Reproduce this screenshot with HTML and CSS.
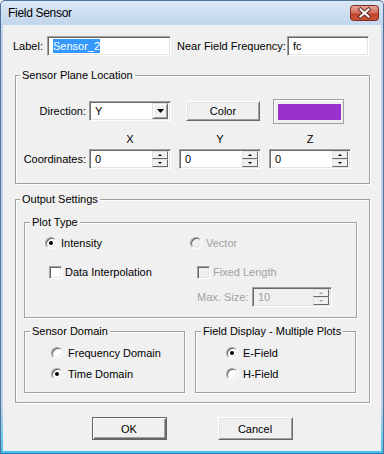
FILE: index.html
```html
<!DOCTYPE html>
<html lang="en">
<head>
  <meta charset="UTF-8">
  <title>Field Sensor</title>
  <link rel="stylesheet" href="styles.css">
</head>
<body>
  <div class="window">
    <div class="titlebar">
      <span class="title">Field Sensor</span>
      <span class="close">
        <svg width="29" height="16" viewBox="0 0 29 16">
          <defs>
            <linearGradient id="red" x1="0" y1="0" x2="0" y2="1">
              <stop offset="0" stop-color="#e8a99b"/>
              <stop offset="0.5" stop-color="#d4705c"/>
              <stop offset="0.55" stop-color="#c2442c"/>
              <stop offset="1" stop-color="#c9553a"/>
            </linearGradient>
          </defs>
          <rect x="0.5" y="0.5" width="28" height="15" rx="3" fill="url(#red)" stroke="#7a2a20"/>
          <path d="M10.5 4.5 L18.5 11.5 M18.5 4.5 L10.5 11.5" stroke="#5a2218" stroke-width="4" stroke-linecap="square"/>
          <path d="M10.5 4.5 L18.5 11.5 M18.5 4.5 L10.5 11.5" stroke="#fff" stroke-width="2.2" stroke-linecap="square"/>
        </svg>
      </span>
    </div>

    <div class="client">
      <div class="top-row">
        <span class="lbl lbl-label">Label:</span>
        <div class="edit w-label"><span class="sel">Sensor_2</span></div>
        <span class="lbl lbl-freq">Near Field Frequency:</span>
        <div class="edit w-freq">fc</div>
      </div>

      <div class="group g-plane">
        <div class="group-title">Sensor Plane Location</div>
        <div class="row dir-row">
          <span class="rlabel">Direction:</span>
          <div class="edit combo">
            <span class="combo-text">Y</span>
            <span class="combo-btn">
              <svg width="7" height="4" viewBox="0 0 7 4"><polygon points="0,0 7,0 3.5,4" fill="#000"/></svg>
            </span>
          </div>
          <button class="btn btn-color">Color</button>
          <div class="swatch"><div class="swatch-fill"></div></div>
        </div>
        <div class="row axis-row">
          <span class="rlabel"></span>
          <span class="axis">X</span>
          <span class="axis">Y</span>
          <span class="axis">Z</span>
        </div>
        <div class="row coord-row">
          <span class="rlabel">Coordinates:</span>
          <div class="edit spin"><span class="spin-text">0</span><span class="spin-btns"><span class="spin-up"></span><span class="spin-down"></span></span></div>
          <div class="edit spin"><span class="spin-text">0</span><span class="spin-btns"><span class="spin-up"></span><span class="spin-down"></span></span></div>
          <div class="edit spin"><span class="spin-text">0</span><span class="spin-btns"><span class="spin-up"></span><span class="spin-down"></span></span></div>
        </div>
      </div>

      <div class="group g-output">
        <div class="group-title">Output Settings</div>

        <div class="group g-plot">
          <div class="group-title inner">Plot Type</div>
          <div class="plot-grid">
            <div class="opt row-a"><span class="radio on"></span>Intensity</div>
            <div class="opt row-a disabled"><span class="radio"></span>Vector</div>
            <div class="opt row-b ind-1"><span class="check"></span>Data Interpolation</div>
            <div class="opt row-b ind-2 disabled"><span class="check"></span>Fixed Length</div>
            <div class="opt row-c"></div>
            <div class="opt row-c ind-2 disabled">
              <span class="max-label">Max. Size:</span>
              <div class="edit spin spin-max"><span class="spin-text">10</span><span class="spin-btns"><span class="spin-up"></span><span class="spin-down"></span></span></div>
            </div>
          </div>
        </div>

        <div class="bottom-groups">
          <div class="group g-domain">
            <div class="group-title inner">Sensor Domain</div>
            <div class="opt first"><span class="radio"></span>Frequency Domain</div>
            <div class="opt second"><span class="radio on"></span>Time Domain</div>
          </div>
          <div class="group g-field">
            <div class="group-title inner">Field Display - Multiple Plots</div>
            <div class="opt first"><span class="radio on"></span>E-Field</div>
            <div class="opt second"><span class="radio"></span>H-Field</div>
          </div>
        </div>
      </div>

      <div class="buttons">
        <button class="btn btn-default">OK</button>
        <button class="btn">Cancel</button>
      </div>
    </div>
  </div>
</body>
</html>
```

FILE: styles.css
```css
body {
  margin: 0;
  background: #fff;
  font-family: "Liberation Sans", Arial, sans-serif;
  font-size: 11px;
  color: #000;
}
.window {
  width: 384px;
  height: 454px;
  box-sizing: border-box;
  border: 1px solid #52729a;
  border-bottom-color: #1f7fb8;
  border-radius: 5px 5px 0 0;
  padding: 0 2px 2px 2px;
  background: linear-gradient(#dce8f5, #c0d5ec 24px, #b9d3ec 90%, #45c0ec);
  display: flex;
  flex-direction: column;
}
.titlebar {
  height: 24px;
  display: flex;
  align-items: center;
  justify-content: space-between;
  padding: 0 2px 0 5px;
}
.title {
  font-size: 12px;
  letter-spacing: -0.3px;
}
.close {
  display: flex;
}
.client {
  flex: 1;
  background: #f0f0f0;
  padding: 11px 11px 0 12px;
}

/* sunken edit box */
.edit {
  box-sizing: border-box;
  height: 20px;
  background: #fff;
  border: 1px solid;
  border-color: #a0a0a0 #fff #fff #a0a0a0;
  box-shadow: inset 1px 1px #696969, inset -1px -1px #e3e3e3;
  padding: 0 4px 0 5px;
  display: flex;
  align-items: center;
}
.top-row {
  display: flex;
  align-items: center;
  margin-left: -2px;
}
.lbl-label {
  width: 34px;
}
.w-label {
  width: 124px;
}
.lbl-freq {
  width: 110px;
  margin-left: 6px;
}
.w-freq {
  width: 82px;
}
.sel {
  background: #3399ff;
  color: #fff;
  line-height: 14px;
}

/* group boxes */
.group {
  border: 1px solid #a0a0a0;
  box-shadow: inset 1px 1px #fff, 1px 1px #fff;
}
.group-title {
  width: fit-content;
  margin: -7px 0 0 4px;
  padding: 0 2px;
  line-height: 13px;
  background: #f0f0f0;
}
.group-title.inner {
  margin-left: 5px;
}
.g-plane {
  width: 355px;
  box-sizing: border-box;
  margin-top: 19px;
  padding-bottom: 14px;
}
.row {
  display: flex;
  align-items: center;
}
.rlabel {
  width: 70px;
  margin-right: 3px;
  text-align: right;
}
.dir-row {
  margin-top: 19px;
  height: 20px;
}
.combo {
  width: 82px;
  justify-content: space-between;
  padding-right: 2px;
}
.combo-btn {
  box-sizing: border-box;
  width: 16px;
  height: 16px;
  background: #f0f0f0;
  border: 1px solid;
  border-color: #e3e3e3 #696969 #696969 #e3e3e3;
  box-shadow: inset 1px 1px #fff, inset -1px -1px #a0a0a0;
  display: flex;
  align-items: center;
  justify-content: center;
}
.btn {
  box-sizing: border-box;
  width: 75px;
  height: 23px;
  font-family: inherit;
  font-size: 11px;
  color: #000;
  background: #f0f0f0;
  border: 1px solid;
  border-color: #fff #696969 #696969 #fff;
  box-shadow: inset 1px 1px #e3e3e3, inset -1px -1px #a0a0a0;
  padding: 0;
}
.btn-color {
  width: 74px;
  height: 20px;
  margin-left: 15px;
}
.swatch {
  box-sizing: border-box;
  width: 71px;
  height: 25px;
  margin-left: 13px;
  border: 1px solid #a0a0a0;
  box-shadow: inset 1px 1px #fff;
  padding: 4px 2px 3px 4px;
}
.swatch-fill {
  height: 100%;
  background: #9932cc;
}
.axis-row {
  margin-top: 12px;
  line-height: 13px;
}
.axis {
  width: 82px;
  margin-right: 8px;
  text-align: center;
}
.coord-row {
  margin-top: 3px;
}
.spin {
  width: 82px;
  margin-right: 8px;
  justify-content: space-between;
  padding-right: 2px;
}
.spin-btns {
  display: flex;
  flex-direction: column;
  width: 16px;
  height: 16px;
}
.spin-up, .spin-down {
  box-sizing: border-box;
  height: 8px;
  background: #f0f0f0;
  border: 1px solid;
  border-color: #e3e3e3 #696969 #696969 #e3e3e3;
  display: flex;
  align-items: center;
  justify-content: center;
}
.spin-up::after, .spin-down::after {
  content: "";
  border-left: 2px solid transparent;
  border-right: 2px solid transparent;
}
.spin-up::after {
  border-bottom: 2px solid #000;
}
.spin-down::after {
  border-top: 2px solid #000;
}

/* output settings */
.g-output {
  width: 355px;
  box-sizing: border-box;
  margin-top: 15px;
  padding-bottom: 9px;
}
.g-plot {
  width: 333px;
  box-sizing: border-box;
  margin: 16px 0 0 8px;
  padding: 0 0 10px 20px;
}
.g-plot .group-title {
  margin-left: -15px;
}
.plot-grid {
  display: grid;
  grid-template-columns: 145px auto;
}
.opt {
  display: flex;
  align-items: center;
  height: 16px;
}
.row-a {
  margin-top: 6px;
}
.row-b {
  margin-top: 13px;
}
.row-c {
  margin-top: 7px;
  height: 20px;
}
.ind-1 {
  margin-left: 4px;
}
.ind-2 {
  margin-left: 7px;
}
.disabled {
  color: #a0a0a0;
}
.radio {
  box-sizing: border-box;
  width: 12px;
  height: 12px;
  margin-right: 4px;
  border-radius: 50%;
  background: #fff;
  border: 1px solid;
  border-color: #a0a0a0 #fff #fff #a0a0a0;
  box-shadow: inset 1px 1px #696969, inset -1px -1px #e3e3e3;
  display: flex;
  align-items: center;
  justify-content: center;
}
.radio.on::after {
  content: "";
  width: 4px;
  height: 4px;
  border-radius: 50%;
  background: #000;
}
.check {
  box-sizing: border-box;
  width: 13px;
  height: 13px;
  margin-right: 3px;
  background: #fff;
  border: 1px solid;
  border-color: #a0a0a0 #fff #fff #a0a0a0;
  box-shadow: inset 1px 1px #696969, inset -1px -1px #e3e3e3;
}
.disabled .radio, .disabled .check {
  background: #f0f0f0;
}
.max-label {
  width: 55px;
}
.spin-max {
  width: 80px;
  background: #f0f0f0;
  margin-right: 0;
}
.spin-max .spin-up::after {
  border-bottom-color: #a0a0a0;
}
.spin-max .spin-down::after {
  border-top-color: #a0a0a0;
}
.bottom-groups {
  display: flex;
  margin: 13px 0 0 8px;
  gap: 10px;
}
.g-domain, .g-field {
  width: 161px;
  box-sizing: border-box;
  padding-bottom: 10px;
}
.g-domain {
  padding-left: 26px;
}
.g-field {
  padding-left: 30px;
}
.g-domain .group-title {
  margin-left: -21px;
}
.g-field .group-title {
  margin-left: -25px;
}
.opt.first {
  margin-top: 7px;
}
.opt.second {
  margin-top: 5px;
}
.opt.first .radio, .opt.second .radio {
  margin-right: 5px;
}
.buttons {
  display: flex;
  justify-content: center;
  gap: 51px;
  margin-top: 14px;
  margin-left: -12px;
  margin-right: -11px;
}
.btn-default {
  border-color: #646464;
  box-shadow: inset 1px 1px #fff, inset -1px -1px #696969, inset -2px -2px #a0a0a0;
}
```
